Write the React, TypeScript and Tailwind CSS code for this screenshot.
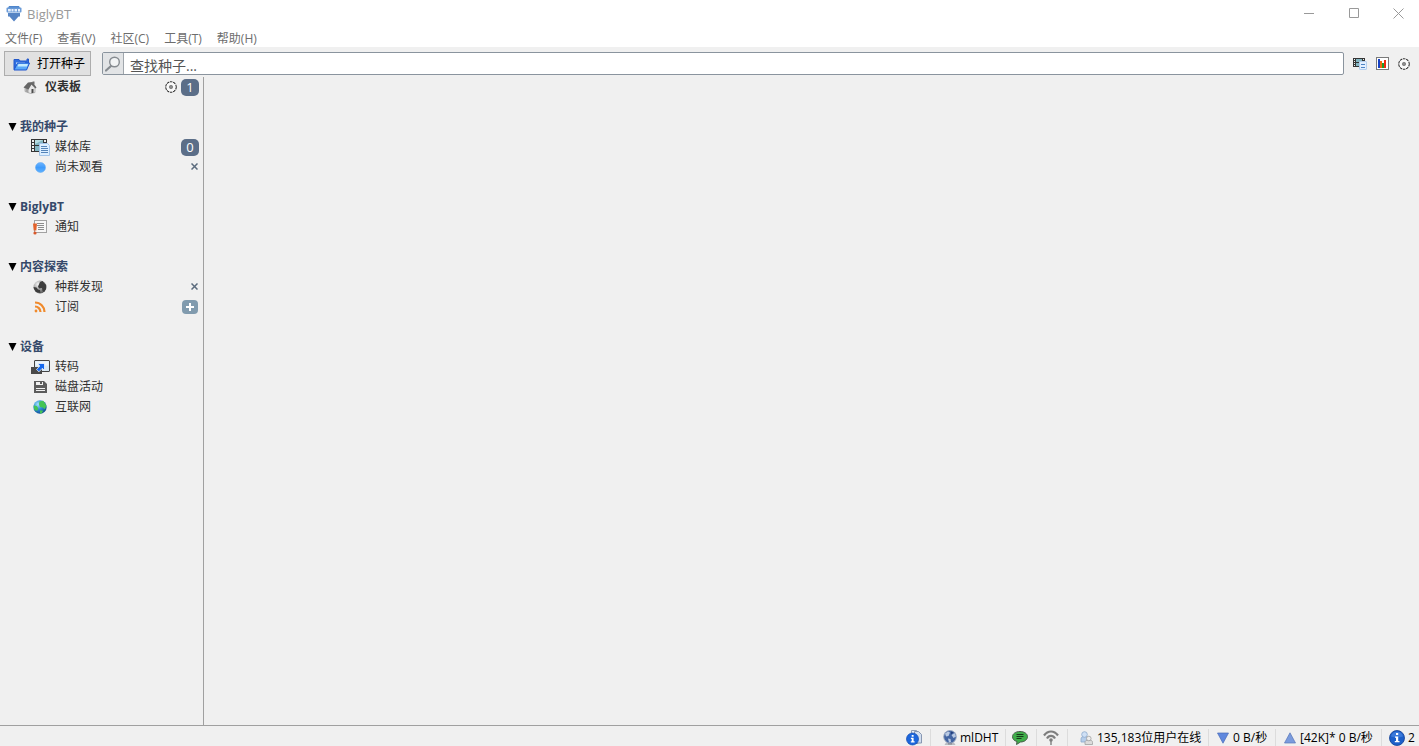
import React from 'react';

type IconProps = { className?: string };

const LogoIcon: React.FC<IconProps> = ({ className }) => (
    <svg className={className} width="16" height="16" viewBox="0 0 16 16" aria-hidden="true">
        <path d="M3 0h10l1 2H2z" fill="#4f86cc" />
        <rect x="0.500" y="1.500" width="15" height="5" rx="1" fill="#6b9bd8" />
        <path d="M2 3h2.800v2.500H2zM5.500 3h2v2.500h-2zM8.500 3H11v2.500H8.500zM12 3h2v2.500h-2z" fill="#e6effb" />
        <path d="M2 7h12v3.500h-1.500L8 15.500L3.500 10.500H2z" fill="#5584c4" />
    </svg>
);

const FolderIcon: React.FC<IconProps> = ({ className }) => (
    <svg className={className} width="17" height="14" viewBox="0 0 17 14" aria-hidden="true">
        <path d="M1 12.500V2.500h5l1 1.500h7V2h1.500v4" fill="#2f6fe0" stroke="#2459c9" strokeWidth="1" />
        <path d="M3 5.500h9v2H3z" fill="#d9f2ff" />
        <path d="M4.500 6H16.500L13.500 13H1z" fill="#5ba9f8" stroke="#1f55cf" strokeWidth="1" />
        <path d="M5.500 7h9.500L14 9.500H4.500z" fill="#c4ebff" />
    </svg>
);

const SearchIcon: React.FC<IconProps> = ({ className }) => (
    <svg className={className} width="16" height="16" viewBox="0 0 16 16" fill="none" aria-hidden="true">
        <path d="M6 10L1 14.500" stroke="#868b90" strokeWidth="2.200" strokeLinecap="round" />
        <circle cx="9.500" cy="6" r="4.800" fill="#f2f4f5" stroke="#868b90" strokeWidth="1.400" />
    </svg>
);

const LibraryIcon: React.FC<IconProps> = ({ className }) => (
    <svg className={className} viewBox="0 0 19 17" aria-hidden="true">
        <rect x="0" y="0" width="16" height="13" fill="#353535" />
        <path d="M4 1h8v5H4zM4 7h8v5H4z" fill="#83b6c2" />
        <path d="M4 1h8L4 5z" fill="#b8dde2" />
        <path d="M1 1h2v2H1zM1 4h2v2H1zM1 7h2v2H1zM1 10h2v2H1zM13 1h2v2h-2z" fill="#f0f0f0" />
        <path d="M8.500 4.500h8l2 2v10h-10z" fill="#dceeff" stroke="#a3c4e8" />
        <path d="M10 7.500H16M10 9.500H17M10 11.500H17M10 13.500H17" stroke="#5584b8" strokeWidth="1" />
    </svg>
);

const SmallLibraryIcon: React.FC<IconProps> = ({ className }) => (
    <svg className={className} width="14" height="12" viewBox="0 0 14 12" aria-hidden="true">
        <rect x="0" y="0" width="12" height="9" fill="#353535" />
        <path d="M3 1h6v3H3zM3 5h5v3H3z" fill="#83b6c2" />
        <path d="M1 1h1v1H1zM1 3h1v1H1zM1 5h1v1H1zM1 7h1v1H1zM10 1h1v1h-1z" fill="#f0f0f0" />
        <rect x="6.500" y="3.500" width="7" height="8" rx="0.500" fill="#e2efff" stroke="#b4cfee" />
        <path d="M8 6.500h4M8 9.500h4" stroke="#4d84c4" />
    </svg>
);

const ChartIcon: React.FC<IconProps> = ({ className }) => (
    <svg className={className} width="13" height="13" viewBox="0 0 13 13" aria-hidden="true">
        <rect x="0.500" y="0.500" width="12" height="12" fill="#fff" stroke="#7a7a7a" />
        <path d="M2 2h2v9H2z" fill="#1742c4" />
        <path d="M4 4h2v7H4z" fill="#f06a10" />
        <path d="M6 6h2v5H6z" fill="#1a9e28" />
        <path d="M8 3h2v8H8z" fill="#ee2b12" />
    </svg>
);

const GearIcon: React.FC<IconProps> = ({ className }) => (
    <svg className={className} width="12" height="12" viewBox="0 0 12 12" fill="none" aria-hidden="true">
        <circle cx="6" cy="6" r="5.200" stroke="#333" strokeWidth="1.200" strokeDasharray="2.500 0.767" />
        <circle cx="6" cy="6" r="4.500" fill="#fafafa" />
        <circle cx="6" cy="6" r="1.700" fill="#8a8a8a" stroke="#666" strokeWidth="0.600" />
    </svg>
);

const HomeIcon: React.FC<IconProps> = ({ className }) => (
    <svg className={className} width="14" height="13" viewBox="0 0 14 13" aria-hidden="true">
        <path d="M2 6.500L8 3l4 3.500v5L7.500 12.500L2 10.500z" fill="#e6e6e6" stroke="#909090" strokeWidth="0.600" />
        <path d="M2.500 6.500l3 1.500v4l-3-1.500z" fill="#a2a2a2" />
        <path d="M0.500 6.500L5 1.500L9.500 1L13.500 6.500L12.500 7.500L8.500 3.500L5.500 8.500z" fill="#666" />
        <path d="M9.500 0.500h2v3l-2-1z" fill="#6d6d6d" />
        <path d="M8.500 8h2v3.800l-2 0.400z" fill="#4b4b4b" />
    </svg>
);

const DotIcon: React.FC<IconProps> = ({ className }) => (
    <svg className={className} width="11" height="11" viewBox="0 0 11 11" aria-hidden="true">
        <defs>
            <linearGradient id="dot" x1="0" y1="0" x2="0" y2="1">
                <stop offset="0" stopColor="#6db4ff" />
                <stop offset="0.500" stopColor="#3f9bfb" />
                <stop offset="1" stopColor="#5fb2ff" />
            </linearGradient>
        </defs>
        <circle cx="5.500" cy="5.500" r="5" fill="url(#dot)" stroke="#5ba6f3" strokeWidth="0.500" />
    </svg>
);

const NoticeIcon: React.FC<IconProps> = ({ className }) => (
    <svg className={className} width="14" height="16" viewBox="0 0 14 16" aria-hidden="true">
        <rect x="1.500" y="1.500" width="12" height="12" fill="#f7f7f7" stroke="#a2a2a2" />
        <path d="M4 4.500h7M4 6.500h7M5 8.500h6M5 10.500h6" stroke="#8c8c8c" />
        <path d="M0 4.500h4L3.300 11.500H0.700z" fill="#e2622c" />
        <circle cx="2" cy="14" r="1.600" fill="#d9582a" />
    </svg>
);

const SwarmIcon: React.FC<IconProps> = ({ className }) => (
    <svg className={className} width="14" height="14" viewBox="0 0 14 14" aria-hidden="true">
        <defs>
            <radialGradient id="swarm" cx="0.350" cy="0.300" r="0.800">
                <stop offset="0" stopColor="#f5f5f5" />
                <stop offset="0.500" stopColor="#a0a0a0" />
                <stop offset="1" stopColor="#4a4a4a" />
            </radialGradient>
        </defs>
        <circle cx="7" cy="7" r="6.500" fill="url(#swarm)" />
        <path d="M7 2l2.500-1L13 5v4l-2 3l-1.500-1L9 8L6 8.500L5 6.500zM0.500 7l3 0.500l1.500 2l2 0.500l0.500 3L3 12L1 9z" fill="#3d3d3d" />
    </svg>
);

const RssIcon: React.FC<IconProps> = ({ className }) => (
    <svg className={className} width="12" height="12" viewBox="0 0 12 12" fill="none" stroke="#f08a2c" strokeWidth="2.200" aria-hidden="true">
        <path d="M1 1.500a9.500 9.500 0 0 1 9.500 9.500M1 5.500a5.500 5.500 0 0 1 5.500 5.500" />
        <circle cx="2" cy="10" r="1.400" fill="#f08a2c" stroke="none" />
    </svg>
);

const TranscodeIcon: React.FC<IconProps> = ({ className }) => (
    <svg className={className} width="19" height="14" viewBox="0 0 19 14" aria-hidden="true">
        <rect x="3.500" y="0.500" width="15" height="11" rx="0.500" fill="#d8e8f3" stroke="#444" />
        <path d="M4.500 1.500h13v4h-13z" fill="#edf5fa" />
        <rect x="0" y="7" width="11" height="7" fill="#4a4a4a" />
        <path d="M6.500 3.500h7v7l-2.200-2.200L8 11.800L5.500 9.500L8.800 6z" fill="#1267ee" stroke="#fff" strokeWidth="0.700" />
    </svg>
);

const DiskIcon: React.FC<IconProps> = ({ className }) => (
    <svg className={className} width="13" height="12" viewBox="0 0 13 12" aria-hidden="true">
        <path d="M0 0h10l3 3v9H0z" fill="#5c5c5c" />
        <path d="M2 1h7v3H2zM2 7h9v1H2zM2 9h9v1H2z" fill="#f0f0f0" />
        <path d="M6 1h2v2H6z" fill="#5c5c5c" />
    </svg>
);

const GlobeIcon: React.FC<IconProps> = ({ className }) => (
    <svg className={className} width="14" height="14" viewBox="0 0 13 13" aria-hidden="true">
        <defs>
            <radialGradient id="globe" cx="0.350" cy="0.300" r="0.750">
                <stop offset="0" stopColor="#a5e2fb" />
                <stop offset="0.500" stopColor="#2d8fd8" />
                <stop offset="1" stopColor="#104b91" />
            </radialGradient>
        </defs>
        <circle cx="6.500" cy="6.500" r="6.200" fill="url(#globe)" />
        <path d="M6 1.500l3.500-0.700L12.500 5l-1.500 3.500L9 7L6.500 6.500L5.500 4zM0.500 5l3 0.500L5 8l-1 2L1.500 9.500zM6.500 9.500l3 0.500l-1.500 2.500h-1.500z" fill="#43c455" />
    </svg>
);

const InfoIcon: React.FC<IconProps> = ({ className }) => (
    <svg className={className} width="16" height="16" viewBox="0 0 16 16" aria-hidden="true">
        <circle cx="8" cy="8" r="7.500" fill="#1d5fc9" stroke="#123f94" strokeWidth="0.800" />
        <path d="M2 6.500a6.200 6.200 0 0 1 12 0Q8 8.500 2 6.500z" fill="#3a79da" />
        <path d="M7 3h2.200v2H7zM6 6.500h3.200V11h1.300v1.300H5.800V11H7V7.800H6z" fill="#fff" />
    </svg>
);

const InfoDocIcon: React.FC<IconProps> = ({ className }) => (
    <svg className={className} width="16" height="16" viewBox="0 0 16 16" aria-hidden="true">
        <path d="M5.500 0.500h5l1.500 2v11h-6.500z" fill="#e7edf6" stroke="#8795ae" strokeWidth="0.900" />
        <path d="M8.500 1.500h4l3 3v8.500h-7z" fill="#d2deef" stroke="#7e8daa" strokeWidth="0.900" />
        <circle cx="6.500" cy="9" r="6" fill="#1c66dc" stroke="#0e49b0" strokeWidth="0.700" />
        <path d="M5.700 5h1.900v1.700H5.700zM4.900 7.800h2.700v3.500h1v1.200h-3.800v-1.200h0.900V9h-0.800z" fill="#fff" />
    </svg>
);

const DhtIcon: React.FC<IconProps> = ({ className }) => (
    <svg className={className} width="14" height="16" viewBox="0 0 14 16" aria-hidden="true">
        <path d="M3 12.500h8l1.500 2.500h-11z" fill="#b9bcc2" />
        <path d="M5 12h4v2.500H5z" fill="#868a92" />
        <circle cx="7" cy="6.800" r="6.300" fill="#4465a2" stroke="#9ba7bd" strokeWidth="0.900" />
        <path d="M2 3.500l3-2l2 1L5.500 6L3 6.500zM8.500 5l3-2l1.500 3.500L10.500 8zM5 8.500l2.500 0.500l0.500 3l-2 0.500z" fill="#b9c9e2" />
        <path d="M8 1.500l2.500 1L8 4.500z" fill="#223e7b" />
    </svg>
);

const ChatIcon: React.FC<IconProps> = ({ className }) => (
    <svg className={className} width="16" height="14" viewBox="0 0 16 14" aria-hidden="true">
        <path d="M8 0.500c4.300 0 7.500 2.200 7.500 5.200S12.300 11 8.500 11L4.500 13.500L5 10.500C2.200 9.800 0.500 8 0.500 5.700C0.500 2.700 3.700 0.500 8 0.500z" fill="#3fae49" stroke="#4b5e4c" />
        <path d="M4.500 3.500h7M4.500 5.500h7M4.500 7.500h5" stroke="#1a381c" />
    </svg>
);

const SignalIcon: React.FC<IconProps> = ({ className }) => (
    <svg className={className} width="16" height="15" viewBox="0 0 16 15" fill="none" stroke="#7e7e7e" strokeWidth="2.200" aria-hidden="true">
        <path d="M1 5.500C3 2.800 5.300 1.500 8 1.500S13 2.800 15 5.500M4 8.500c1-1.800 2.300-2.600 4-2.600S11 6.700 12 8.500" />
        <circle cx="8" cy="10" r="1.800" fill="#7e7e7e" stroke="none" />
        <path d="M8 10v5" strokeWidth="1.400" />
    </svg>
);

const UsersIcon: React.FC<IconProps> = ({ className }) => (
    <svg className={className} width="13" height="14" viewBox="0 0 13 14" strokeWidth="0.800" aria-hidden="true">
        <path d="M1 11V8c0-2 1.500-2.500 3.500-2.500S8 6 8 8v3z" fill="#b5cdea" stroke="#8daacc" />
        <circle cx="4.500" cy="3.500" r="2.800" fill="#cfe0f5" stroke="#8daacc" />
        <path d="M5 13.500v-2c0-2 1.500-2.500 3.800-2.500s3.700 0.500 3.700 2.500v2z" fill="#dcdcdc" stroke="#a0a0a0" />
        <circle cx="8.800" cy="7.500" r="2.300" fill="#ececec" stroke="#a0a0a0" />
    </svg>
);

const SpeedIcon: React.FC<{ up?: boolean }> = ({ up }) => (
    <svg width="12" height="12" viewBox="0 0 12 12" className="shrink-0" aria-hidden="true">
        <path
            d={up ? 'M6 0.800L11.500 11H0.500z' : 'M6 11.200L0.500 1H11.500z'}
            fill={up ? '#7a9bdd' : '#6088de'}
            stroke={up ? '#5876b8' : '#4a6db8'}
            strokeWidth="0.700"
        />
    </svg>
);

const CloseMark: React.FC = () => (
    <svg width="7" height="7" viewBox="0 0 7 7" stroke="#5b6b7d" strokeWidth="1.500" aria-hidden="true">
        <path d="M0.500 0.500l6 6M6.500 0.500l-6 6" />
    </svg>
);

const Badge: React.FC<{ children: React.ReactNode }> = ({ children }) => (
    <span className="flex h-[17px] w-[18px] items-center justify-center rounded-[5px] bg-[#5b6e88] text-[13px] leading-none text-white">
        {children}
    </span>
);

const Row: React.FC<{ icon: React.ReactNode; label: string; end?: React.ReactNode }> = ({ icon, label, end }) => (
    <li className="flex h-5 items-center pr-1 pl-[30px]">
        <span className="flex w-5 shrink-0 items-center justify-center">{icon}</span>
        <span className="ml-[5px] flex-1 text-[#303030]">{label}</span>
        {end}
    </li>
);

const Section: React.FC<{ title: string; children: React.ReactNode }> = ({ title, children }) => (
    <section className="mt-5">
        <h2 className="flex h-5 items-center gap-[3px] pl-2 font-bold text-[#35496a]">
            <svg width="9" height="8" viewBox="0 0 9 8" aria-hidden="true">
                <path d="M0.500 0h8L4.500 8z" fill="#000" />
            </svg>
            {title}
        </h2>
        <ul>{children}</ul>
    </section>
);

const closeButton = (
    <button type="button" aria-label="关闭" className="mr-px flex h-4 w-2 items-start justify-center pt-1">
        <CloseMark />
    </button>
);

const Divider: React.FC = () => <span className="h-[18px] w-px shrink-0 bg-[#dcdcdc]" />;

const menus = ['文件(F)', '查看(V)', '社区(C)', '工具(T)', '帮助(H)'];

export default function App() {
    return (
        <div className="flex min-h-screen flex-col bg-[#f0f0f0] font-['Open_Sans','Noto_Sans_CJK_SC',sans-serif] text-[12px] leading-4 text-black">
            <header className="bg-white">
                <div className="flex h-[27px] items-center pl-[6px]">
                    <LogoIcon />
                    <h1 className="ml-[5px] flex-1 text-[13px] text-[#999]">BiglyBT</h1>
                    <button type="button" aria-label="最小化" className="flex h-full w-[46px] items-center justify-center">
                        <svg width="11" height="11" viewBox="0 0 11 11" stroke="#999"><path d="M0 5.500h10" /></svg>
                    </button>
                    <button type="button" aria-label="最大化" className="flex h-full w-[45px] items-center justify-center">
                        <svg width="11" height="11" viewBox="0 0 11 11" stroke="#999" fill="none"><path d="M0.500 0.500h9v9h-9z" /></svg>
                    </button>
                    <button type="button" aria-label="关闭窗口" className="flex h-full w-[42px] items-center justify-center">
                        <svg width="11" height="11" viewBox="0 0 11 11" stroke="#999"><path d="M0.500 0.500l10 10M10.500 0.500l-10 10" /></svg>
                    </button>
                </div>
                <nav className="flex h-5 items-center gap-[15px] pt-[3px] pl-[5px] text-[#6d6d6d]">
                    {menus.map((m) => <button key={m} type="button">{m}</button>)}
                </nav>
            </header>

            <div className="flex h-[30px] items-center pt-1 pr-[9px] pb-px pl-1">
                <button type="button" className="flex h-[25px] w-[87px] shrink-0 items-center gap-[7px] border border-[#adadad] bg-[#e1e1e1] pl-2">
                    <FolderIcon className="shrink-0" />
                    打开种子
                </button>
                <div className="ml-[11px] flex h-[23px] flex-1 overflow-hidden rounded-[2px] border border-[#8a949e] bg-white">
                    <button type="button" aria-label="搜索" className="flex w-[21px] shrink-0 items-center justify-center border-r border-[#a0a6ac] bg-[#e2e4e6]">
                        <SearchIcon />
                    </button>
                    <input
                        type="text"
                        aria-label="查找种子"
                        placeholder="查找种子..."
                        className="min-w-0 flex-1 bg-transparent pt-1 pl-[6px] text-[14px] leading-4 outline-none placeholder:text-[#555]"
                    />
                </div>
                <div className="ml-[9px] flex items-center gap-[9px]">
                    <button type="button" aria-label="媒体库"><SmallLibraryIcon /></button>
                    <button type="button" aria-label="统计"><ChartIcon /></button>
                    <button type="button" aria-label="设置"><GearIcon /></button>
                </div>
            </div>

            <div className="flex flex-1">
                <aside className="w-[204px] shrink-0 border-r border-[#a0a0a0]">
                    <div className="flex h-5 items-center pr-1 pl-[23px]">
                        <HomeIcon />
                        <span className="ml-2 flex-1 font-bold text-[#303030]">仪表板</span>
                        <button type="button" aria-label="仪表板设置" className="mr-1"><GearIcon /></button>
                        <Badge>1</Badge>
                    </div>
                    <Section title="我的种子">
                        <Row icon={<LibraryIcon className="h-[17px] w-[19px]" />} label="媒体库" end={<Badge>0</Badge>} />
                        <Row icon={<DotIcon />} label="尚未观看" end={closeButton} />
                    </Section>
                    <Section title="BiglyBT">
                        <Row icon={<NoticeIcon />} label="通知" />
                    </Section>
                    <Section title="内容探索">
                        <Row icon={<SwarmIcon />} label="种群发现" end={closeButton} />
                        <Row
                            icon={<RssIcon />}
                            label="订阅"
                            end={
                                <button type="button" aria-label="添加订阅" className="mr-px flex h-[14px] w-4 items-center justify-center rounded-[4px] bg-[#819bae]">
                                    <svg width="8" height="8" viewBox="0 0 8 8" stroke="#fff" strokeWidth="2"><path d="M4 0v8M0 4h8" /></svg>
                                </button>
                            }
                        />
                    </Section>
                    <Section title="设备">
                        <Row icon={<TranscodeIcon />} label="转码" />
                        <Row icon={<DiskIcon />} label="磁盘活动" />
                        <Row icon={<GlobeIcon />} label="互联网" />
                    </Section>
                </aside>
                <main className="flex-1" />
            </div>

            <footer className="flex h-[21px] items-center justify-end border-t border-[#a0a0a0] pt-[3px] whitespace-nowrap">
                <div className="flex w-6 items-center"><InfoDocIcon /></div>
                <Divider />
                <div className="flex w-[74px] items-center gap-[3px] pl-3"><DhtIcon className="shrink-0" />mlDHT</div>
                <Divider />
                <div className="flex w-[30px] items-center pl-[6px]"><ChatIcon /></div>
                <Divider />
                <div className="flex w-[30px] items-center pl-[6px]"><SignalIcon /></div>
                <Divider />
                <div className="flex w-[140px] items-center gap-1 pl-3"><UsersIcon className="shrink-0" />135,183位用户在线</div>
                <Divider />
                <div className="flex w-[66px] items-center gap-1 pl-2"><SpeedIcon />0 B/秒</div>
                <Divider />
                <div className="flex w-[105px] items-center gap-1 pl-2"><SpeedIcon up />[42K]* 0 B/秒</div>
                <Divider />
                <div className="flex w-[37px] items-center gap-[3px] pl-[7px]"><InfoIcon className="shrink-0" />2</div>
            </footer>
        </div>
    );
}
